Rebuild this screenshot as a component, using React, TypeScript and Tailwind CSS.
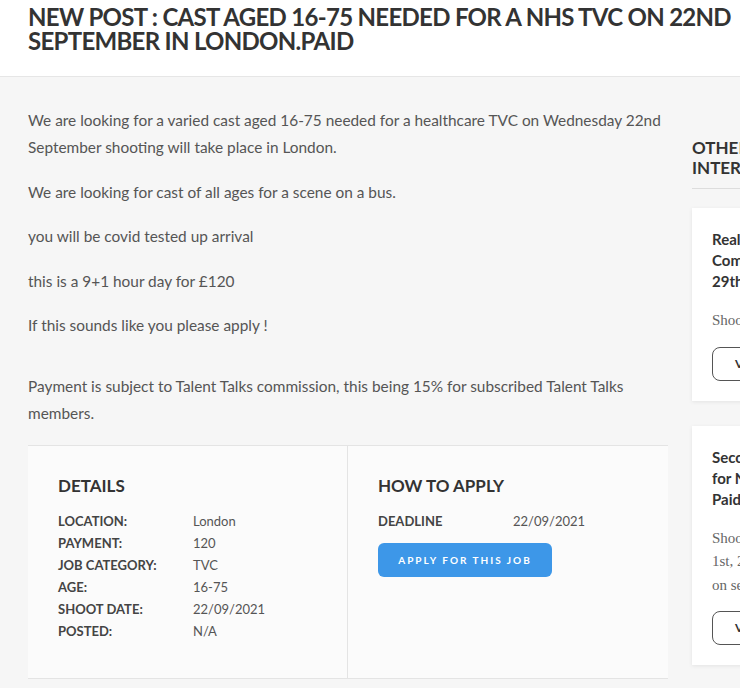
import React from "react";

const details: [string, string][] = [
  ["LOCATION:", "London"],
  ["PAYMENT:", "120"],
  ["JOB CATEGORY:", "TVC"],
  ["AGE:", "16-75"],
  ["SHOOT DATE:", "22/09/2021"],
  ["POSTED:", "N/A"],
];

function SideCard({ title, text }: { title: string[]; text: string[] }) {
  return (
    <div className="bg-white shadow-[0_1px_4px_rgba(0,0,0,0.08)] pl-5 pt-[21px] pb-5 w-[260px]">
      <h4 className="font-['Lato',sans-serif] font-bold text-[15px] leading-[21px] text-[#333] whitespace-nowrap">
        {title.map((t) => (
          <div key={t}>{t}</div>
        ))}
      </h4>
      <p className="font-['Liberation_Serif',serif] text-[15px] leading-[23.5px] text-[#666] mt-[17px] whitespace-nowrap">
        {text.map((t) => (
          <span key={t} className="block">
            {t}
          </span>
        ))}
      </p>
      <button className="mt-[14px] h-[34px] w-[120px] rounded-lg border border-[#555] text-left pl-[22px] font-['Lato',sans-serif] font-bold text-[12px] text-[#333]">
        VIEW JOB
      </button>
    </div>
  );
}

export default function App() {
  return (
    <div className="min-h-[688px] bg-[#f6f6f6] overflow-hidden">
      <header className="bg-white border-b border-[#e6e6e6] h-[77px] pl-7 pt-[5px]">
        <h1 className="font-['Lato',sans-serif] font-bold text-[24px] leading-[24px] tracking-[-0.7px] text-[#333] whitespace-nowrap">
          NEW POST : CAST AGED 16-75 NEEDED FOR A NHS TVC ON 22ND
          <br />
          SEPTEMBER IN LONDON.PAID
        </h1>
      </header>

      <div className="flex gap-6 pl-7 pt-[30px]">
        <main className="w-[640px] shrink-0">
          <div className="font-['Lato',sans-serif] text-[15.4px] leading-[27px] text-[#555] space-y-[17.5px]">
            <p>
              We are looking for a varied cast aged 16-75 needed for a healthcare TVC on Wednesday 22nd September
              shooting will take place in London.
            </p>
            <p>We are looking for cast of all ages for a scene on a bus.</p>
            <p>you will be covid tested up arrival</p>
            <p>this is a 9+1 hour day for £120</p>
            <p>If this sounds like you please apply !</p>
            <p className="pt-[16.5px]">
              Payment is subject to Talent Talks commission, this being 15% for subscribed Talent Talks members.
            </p>
          </div>

          <section className="mt-[18px] grid grid-cols-2 bg-[#fbfbfb] border-y border-[#e4e4e4] font-['Lato',sans-serif]">
            <div className="border-r border-[#e4e4e4] pl-[30px] pt-[28px] pb-[36px]">
              <h3 className="font-bold text-[17px] leading-[24px] text-[#333] mb-[12px]">DETAILS</h3>
              <dl className="text-[13px] leading-[22px]">
                {details.map(([k, v]) => (
                  <div key={k} className="flex">
                    <dt className="w-[135px] font-bold text-[#444]">{k}</dt>
                    <dd className="text-[#555]">{v}</dd>
                  </div>
                ))}
              </dl>
            </div>
            <div className="pl-[30px] pt-[28px]">
              <h3 className="font-bold text-[17px] leading-[24px] text-[#333] mb-[12px]">HOW TO APPLY</h3>
              <div className="flex text-[13px] leading-[22px]">
                <span className="w-[135px] font-bold text-[#444]">DEADLINE</span>
                <span className="text-[#555]">22/09/2021</span>
              </div>
              <button className="mt-[11px] h-[34px] w-[174px] rounded-md bg-[#3d97e8] text-white font-bold text-[10px] tracking-[2px]">
                APPLY FOR THIS JOB
              </button>
            </div>
          </section>
        </main>

        <aside className="pt-[31px] shrink-0">
          <h3 className="font-['Lato',sans-serif] font-bold text-[17px] leading-[20px] text-[#333] pb-[10px] border-b border-[#ddd] whitespace-nowrap">
            OTHER JOBS OF
            <br />
            INTEREST
          </h3>
          <div className="mt-[19px] space-y-[25px]">
            <SideCard title={["Real People Wanted For", "Commercial Shoot On", "29th September"]} text={["Shoot date September"]} />
            <SideCard
              title={["Second Round Casting", "for NHS Commercial", "Paid"]}
              text={["Shoot dates September", "1st, 2nd and 3rd", "on set in London"]}
            />
          </div>
        </aside>
      </div>
    </div>
  );
}
